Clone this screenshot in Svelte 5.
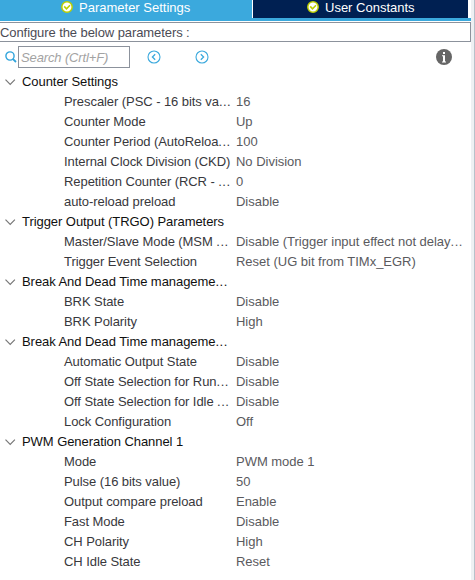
<script>
  const groups = [
    { title: 'Counter Settings', rows: [
      ['Prescaler (PSC - 16 bits va...', '16'],
      ['Counter Mode', 'Up'],
      ['Counter Period (AutoReloa...', '100'],
      ['Internal Clock Division (CKD)', 'No Division'],
      ['Repetition Counter (RCR - ...', '0'],
      ['auto-reload preload', 'Disable']
    ] },
    { title: 'Trigger Output (TRGO) Parameters', rows: [
      ['Master/Slave Mode (MSM ...', 'Disable (Trigger input effect not delay...'],
      ['Trigger Event Selection', 'Reset (UG bit from TIMx_EGR)']
    ] },
    { title: 'Break And Dead Time manageme...', rows: [
      ['BRK State', 'Disable'],
      ['BRK Polarity', 'High']
    ] },
    { title: 'Break And Dead Time manageme...', rows: [
      ['Automatic Output State', 'Disable'],
      ['Off State Selection for Run...', 'Disable'],
      ['Off State Selection for Idle ...', 'Disable'],
      ['Lock Configuration', 'Off']
    ] },
    { title: 'PWM Generation Channel 1', rows: [
      ['Mode', 'PWM mode 1'],
      ['Pulse (16 bits value)', '50'],
      ['Output compare preload', 'Enable'],
      ['Fast Mode', 'Disable'],
      ['CH Polarity', 'High'],
      ['CH Idle State', 'Reset']
    ] }
  ];
</script>

{#snippet check()}
  <svg class="check" width="12" height="12" viewBox="0 0 12 12">
    <circle cx="6" cy="6" r="5.2" fill="#fff" stroke="#bccf00" stroke-width="1.5" />
    <path d="M3.2 5.4 5.5 7.8 9 4.3" fill="none" stroke="#bccf00" stroke-width="1.6" />
  </svg>
{/snippet}

{#snippet label(text)}
  {#if text.endsWith('...')}{text.slice(0, -3)}<span class="dots">...</span>{:else}{text}{/if}
{/snippet}

<div class="panel">
  <div class="main">
    <div class="tabs">
      <div class="tab active">{@render check()}<span>Parameter Settings</span></div>
      <div class="tab user">{@render check()}<span>User Constants</span></div>
    </div>
    <div class="caption"><span>Configure the below parameters :</span></div>
    <div class="toolbar">
      <svg class="lens" width="12" height="12" viewBox="0 0 12 12" fill="none" stroke="#2fa4dc">
        <circle cx="5" cy="5" r="4.1" stroke-width="1.4" />
        <path d="M7.8 7.8 11 11" stroke-width="1.8" />
      </svg>
      <div class="search"><span>Search (Crtl+F)</span></div>
      <svg class="prev" width="14" height="14" viewBox="0 0 14 14" fill="none" stroke="#3ba9dd">
        <circle cx="7" cy="7" r="6" stroke-width="1.1" />
        <path d="M8.2 4.2 5.4 7l2.8 2.8" stroke-width="1.3" />
      </svg>
      <svg class="next" width="14" height="14" viewBox="0 0 14 14" fill="none" stroke="#3ba9dd">
        <circle cx="7" cy="7" r="6" stroke-width="1.1" />
        <path d="M5.8 4.2 8.6 7 5.8 9.8" stroke-width="1.3" />
      </svg>
      <svg class="info" width="16" height="16" viewBox="0 0 16 16">
        <circle cx="8" cy="8" r="8" fill="#666" />
        <path d="M7 3h2v2H7zM6 6.3h3v6.2h1v1H6v-1h1V7.3H6z" fill="#fff" />
      </svg>
    </div>
    <div class="tree">
      {#each groups as group}
        <div class="group">
          <svg width="11" height="7" viewBox="0 0 11 7" fill="none" stroke="#777" stroke-width="1.2">
            <path d="M.5.6 5.2 5.3 9.9.6" />
          </svg>
          <span>{@render label(group.title)}</span>
        </div>
        {#each group.rows as [name, value]}
          <div class="row">
            <span class="name">{@render label(name)}</span>
            <span class="value">{@render label(value)}</span>
          </div>
        {/each}
      {/each}
    </div>
  </div>
  <div class="gutter"></div>
</div>

<style>
  :global(body) { background: #fff; }
  .panel {
    display: flex;
    width: 475px;
    height: 580px;
    overflow: hidden;
    background: #fff;
    font: 13px/20px "Liberation Sans", Arial, sans-serif;
  }
  span { white-space: nowrap; }
  .main { width: 471px; flex: none; }
  .gutter {
    box-sizing: border-box;
    width: 4px;
    background: #eef0f3;
    border-right: 1px solid #b7c1ca;
  }
  .tabs {
    display: flex;
    width: 472px;
    height: 21px;
    box-sizing: border-box;
    border-bottom: 3px solid #3ba9dd;
    background: #fff;
    color: #fff;
    line-height: 15px;
  }
  .tab { display: flex; height: 18px; box-sizing: border-box; }
  .active { width: 252px; padding-left: 61px; background: #3ba9dd; }
  .user { width: 215px; margin-left: 1px; padding-left: 54px; background: #002052; }
  .check { margin: 1px 6px 0 0; }
  .caption {
    box-sizing: border-box;
    height: 20px;
    margin-top: 1px;
    border: 1px solid #8c929c;
    border-left: 0;
    color: #4b4b55;
    line-height: 19px;
    letter-spacing: -0.08px;
  }
  .toolbar { display: flex; height: 30px; }
  .lens { margin: 9px 1px 0 5px; }
  .search {
    box-sizing: border-box;
    width: 112px;
    height: 22px;
    margin-top: 4px;
    padding-left: 2px;
    border: 1px solid #8c929c;
    color: #a3a3a3;
    font-style: italic;
    line-height: 21px;
    letter-spacing: -0.13px;
  }
  .prev { margin: 8px 0 0 17px; }
  .next { margin: 8px 0 0 34px; }
  .info { margin: 7px 0 0 227px; }
  .group { display: flex; height: 20px; color: #101010; letter-spacing: -0.06px; }
  .group svg { margin: 7px 6px 0 5px; }
  .row { display: flex; height: 20px; padding-left: 64px; color: #38383c; letter-spacing: -0.07px; }
  .name { width: 172px; flex: none; }
  .value { color: #5a5a5e; letter-spacing: -0.02px; }
  .dots { letter-spacing: 0.5px; }
</style>
